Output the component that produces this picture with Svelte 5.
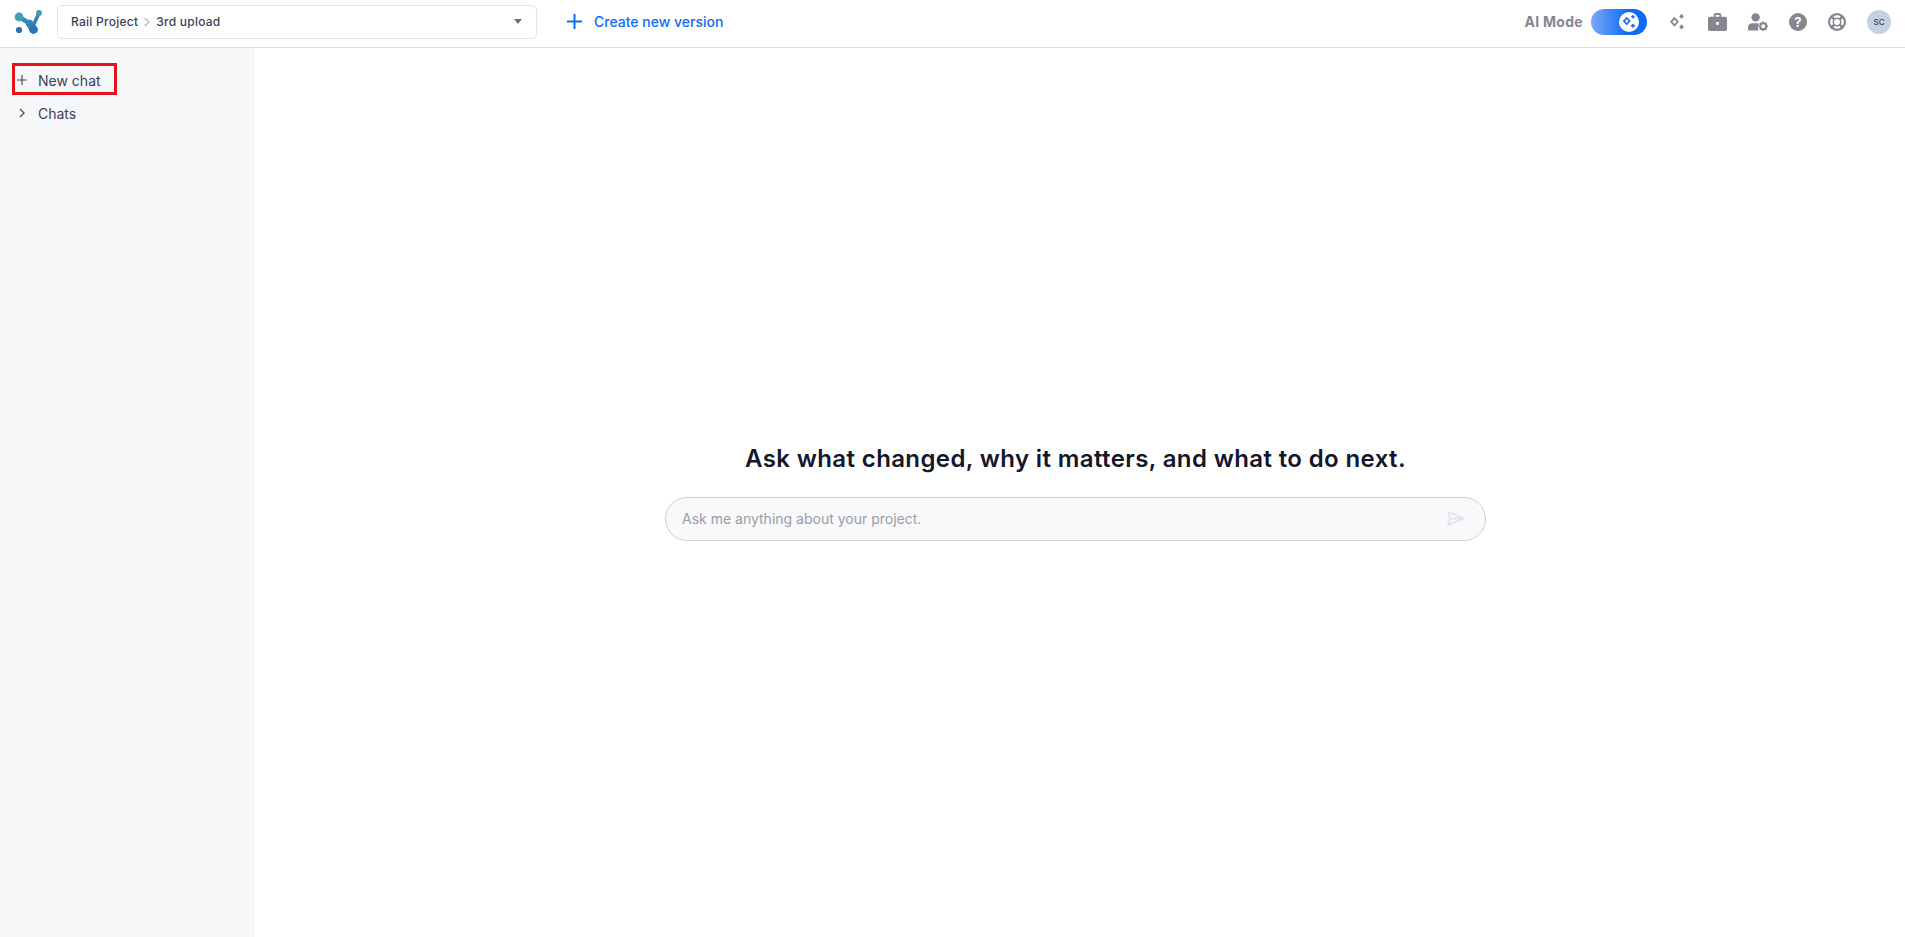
<script lang="ts">
	const chats = 'Chats'
</script>

<div class="page">
	<header class="topbar">
		<svg class="logo" viewBox="0 0 28 26" width="28" height="26" aria-hidden="true">
			<defs>
				<linearGradient id="logo-grad" gradientUnits="userSpaceOnUse" x1="5" y1="4" x2="22" y2="25">
					<stop offset="0" stop-color="#3f9fb0" />
					<stop offset="1" stop-color="#2a6fb8" />
				</linearGradient>
			</defs>
			<path d="M5 8 L15 14" fill="none" stroke="url(#logo-grad)" stroke-width="4.6" stroke-linecap="round" />
			<path d="M25 4 L19.5 16" fill="none" stroke="url(#logo-grad)" stroke-width="3.6" stroke-linecap="round" />
			<path d="M15.5 14.5 L19.5 20.5" fill="none" stroke="url(#logo-grad)" stroke-width="7.4" stroke-linecap="round" />
			<circle cx="5" cy="8" r="4.4" fill="#3f9fb0" />
			<circle cx="19.5" cy="20.5" r="4.4" fill="#2a72ba" />
			<circle cx="25" cy="4" r="2.9" fill="#3f9fb0" />
			<circle cx="5" cy="21" r="3.1" fill="#2a6fb8" />
		</svg>

		<div class="selector">
			<span class="crumb">Rail Project</span>
			<svg class="crumb-sep" viewBox="0 0 8 10" width="8" height="10" aria-hidden="true">
				<path d="M1.5 1 L6 5 L1.5 9" fill="none" stroke="#b4b8c2" stroke-width="1.2" />
			</svg>
			<span class="crumb">3rd upload</span>
			<svg class="caret" viewBox="0 0 8 5" width="8" height="5" aria-hidden="true">
				<path d="M0 0 H8 L4 5 Z" fill="#6f7079" />
			</svg>
		</div>

		<div class="create">
			<svg viewBox="0 0 15 15" width="15" height="15" aria-hidden="true">
				<path d="M7.5 0 V15 M0 7.5 H15" stroke="#0f6cf2" stroke-width="2" />
			</svg>
			<span>Create new version</span>
		</div>

		<div class="tools">
			<span class="ai-label">AI Mode</span>
			<div class="toggle">
				<span class="knob">
					<svg viewBox="0 0 16 16" width="18" height="18" aria-hidden="true">
						<path d="M6 3.4 L9.6 7.2 L6 11 L2.4 7.2 Z M6 5.6 L7.4 7.2 L6 8.8 L4.6 7.2 Z" fill="#2a6fe8" fill-rule="evenodd" />
						<path d="M11.5 1.6 L13.4 3.4 L11.5 5.2 L9.6 3.4 Z M11.5 9.4 L13.6 11.4 L11.5 13.4 L9.4 11.4 Z" fill="#2a6fe8" />
					</svg>
				</span>
			</div>

			<svg class="tool sparkle" viewBox="2 1 12.5 14" width="14" height="16" aria-hidden="true">
				<path d="M6 3.4 L10 7.8 L6 12.2 L2 7.8 Z M6 5.8 L7.9 7.8 L6 9.8 L4.1 7.8 Z" fill="#85868f" fill-rule="evenodd" />
				<path d="M12.3 0.8 L14.4 3 L12.3 5.2 L10.2 3 Z M12.3 10 L14.4 12.4 L12.3 14.8 L10.2 12.4 Z" fill="#85868f" />
			</svg>

			<svg class="tool" viewBox="0 0 20 19" width="19" height="18" aria-hidden="true">
				<path d="M6 4 V2 Q6 0 8 0 H12 Q14 0 14 2 V4 H18 Q20 4 20 6 V17 Q20 19 18 19 H2 Q0 19 0 17 V6 Q0 4 2 4 Z M8 4 H12 V2 H8 Z" fill="#85868f" fill-rule="evenodd" />
				<rect x="8.5" y="9.5" width="3" height="3" fill="#fff" />
			</svg>

			<svg class="tool" viewBox="0 0 21 19" width="20" height="18" aria-hidden="true">
				<circle cx="8" cy="4.6" r="4.4" fill="#85868f" />
				<path d="M0 18.5 V15 Q0 10.8 5 10.8 H10 L11.5 11.5 Q9.5 15 11 18.5 Z" fill="#85868f" />
				<circle cx="16" cy="14" r="3.2" fill="none" stroke="#85868f" stroke-width="2.2" />
				<path d="M16 8.9 V11 M16 17 V19 M11 14 H13 M19 14 H21 M12.5 10.5 L13.9 11.9 M18.1 16.1 L19.5 17.5 M19.5 10.5 L18.1 11.9 M13.9 16.1 L12.5 17.5" stroke="#85868f" stroke-width="1.8" />
			</svg>

			<div class="tool help">?</div>

			<svg class="tool" viewBox="0 0 18 18" width="18" height="18" aria-hidden="true">
				<circle cx="9" cy="9" r="9" fill="#85868f" />
				<circle cx="9" cy="9" r="5.6" fill="none" stroke="#fff" stroke-width="2.4" pathLength="4" stroke-dasharray="0.7 0.3" stroke-dashoffset="0.35" />
				<circle cx="9" cy="9" r="3" fill="#fff" />
			</svg>

			<div class="avatar">SC</div>
		</div>
	</header>

	<div class="body">
		<aside class="sidebar">
			<div class="side-row new-chat">
				<svg viewBox="0 0 10 10" width="10" height="10" aria-hidden="true">
					<path d="M5 0 V10 M0 5 H10" stroke="#4a4c57" stroke-width="1.2" />
				</svg>
				<span>New chat</span>
				<div class="highlight"></div>
			</div>
			<div class="side-row">
				<svg viewBox="0 0 10 10" width="10" height="10" aria-hidden="true">
					<path d="M3 1 L7 5 L3 9" fill="none" stroke="#4a4c57" stroke-width="1.3" />
				</svg>
				<span>{chats}</span>
			</div>
		</aside>

		<main class="main">
			<h1>Ask what changed, why it matters, and what to do next.</h1>
			<div class="ask">
				<span class="placeholder">Ask me anything about your project.</span>
				<svg class="send" viewBox="0 0 18 15" width="18" height="15" aria-hidden="true">
					<path d="M1 1 L17 7.5 L1 14 L3 7.5 Z M3 7.5 H17" fill="none" stroke="#e2e3e9" stroke-width="1.8" stroke-linejoin="round" />
				</svg>
			</div>
		</main>
	</div>
</div>

<style>
	:global(body) {
		margin: 0;
		background: #fff;
		font-family: Inter, 'Liberation Sans', sans-serif;
	}

	.page {
		display: flex;
		flex-direction: column;
		height: 937px;
		overflow: hidden;
	}

	.topbar {
		box-sizing: border-box;
		display: flex;
		align-items: center;
		height: 48px;
		flex: none;
		padding: 0 14px 4px 14px;
		border-bottom: 1px solid #dcdde3;
	}

	.logo {
		flex: none;
	}

	.selector {
		box-sizing: border-box;
		display: flex;
		align-items: center;
		width: 480px;
		height: 34px;
		margin-left: 15px;
		padding: 0 14px 0 13px;
		border: 1px solid #e3e4e8;
		border-radius: 5px;
		font-size: 12px;
		font-weight: 500;
		letter-spacing: 0.25px;
		color: #3a3f56;
	}

	.crumb-sep {
		margin: 0 5px 0 5px;
	}

	.caret {
		margin-left: auto;
	}

	.create {
		display: flex;
		align-items: center;
		gap: 12px;
		margin-left: 30px;
		font-size: 14px;
		font-weight: 500;
		color: #0f6cf2;
	}

	.tools {
		display: flex;
		align-items: center;
		margin-left: auto;
	}

	.ai-label {
		font-size: 14px;
		font-weight: 700;
		letter-spacing: 0.3px;
		color: #85868f;
		margin-right: 8px;
	}

	.toggle {
		box-sizing: border-box;
		display: flex;
		align-items: center;
		justify-content: flex-end;
		width: 56px;
		height: 26px;
		padding-right: 8px;
		border-radius: 13px;
		background: linear-gradient(90deg, #7aa9fb 0%, #0f6cf2 65%);
	}

	.knob {
		display: flex;
		align-items: center;
		justify-content: center;
		width: 20px;
		height: 20px;
		border-radius: 50%;
		background: #fff;
	}

	.sparkle {
		margin-left: 23px;
	}

	.tool + .tool {
		margin-left: 21px;
	}

	.sparkle + .tool {
		margin-left: 24px;
	}

	.help {
		box-sizing: border-box;
		width: 18px;
		height: 18px;
		border-radius: 50%;
		background: #85868f;
		color: #fff;
		font-size: 13px;
		font-weight: 700;
		line-height: 18px;
		text-align: center;
	}

	.avatar {
		width: 24px;
		height: 24px;
		margin-left: 21px;
		border-radius: 50%;
		background: #c5d1df;
		color: #3a3f56;
		font-size: 8px;
		font-weight: 500;
		line-height: 24px;
		text-align: center;
	}

	.body {
		display: flex;
		flex: 1;
		min-height: 0;
	}

	.sidebar {
		box-sizing: border-box;
		width: 254px;
		flex: none;
		padding-top: 15px;
		background: #f6f7f9;
	}

	.side-row {
		position: relative;
		display: flex;
		align-items: center;
		gap: 11px;
		height: 34px;
		padding-left: 17px;
		font-size: 14px;
		color: #3a3f56;
	}

	.new-chat {
		margin-bottom: -1px;
	}

	.highlight {
		position: absolute;
		left: 12px;
		top: 0;
		width: 105px;
		height: 32px;
		box-sizing: border-box;
		border: 3px solid #e3141b;
	}

	.main {
		flex: 1;
		display: flex;
		flex-direction: column;
		align-items: center;
		justify-content: center;
		padding: 0 8px 1px 0;
	}

	h1 {
		margin: 0 0 22px;
		font-size: 24px;
		font-weight: 600;
		letter-spacing: 0.38px;
		line-height: 32px;
		color: #14162b;
	}

	.ask {
		box-sizing: border-box;
		display: flex;
		align-items: center;
		justify-content: space-between;
		width: 821px;
		height: 44px;
		padding: 0 20px 0 16px;
		border: 1px solid #d0d1d9;
		border-radius: 22px;
		background: #f8f9fb;
	}

	.placeholder {
		font-size: 14px;
		padding-bottom: 2px;
		color: #9a9ca8;
	}

	.send {
		margin-bottom: 2px;
	}
</style>
